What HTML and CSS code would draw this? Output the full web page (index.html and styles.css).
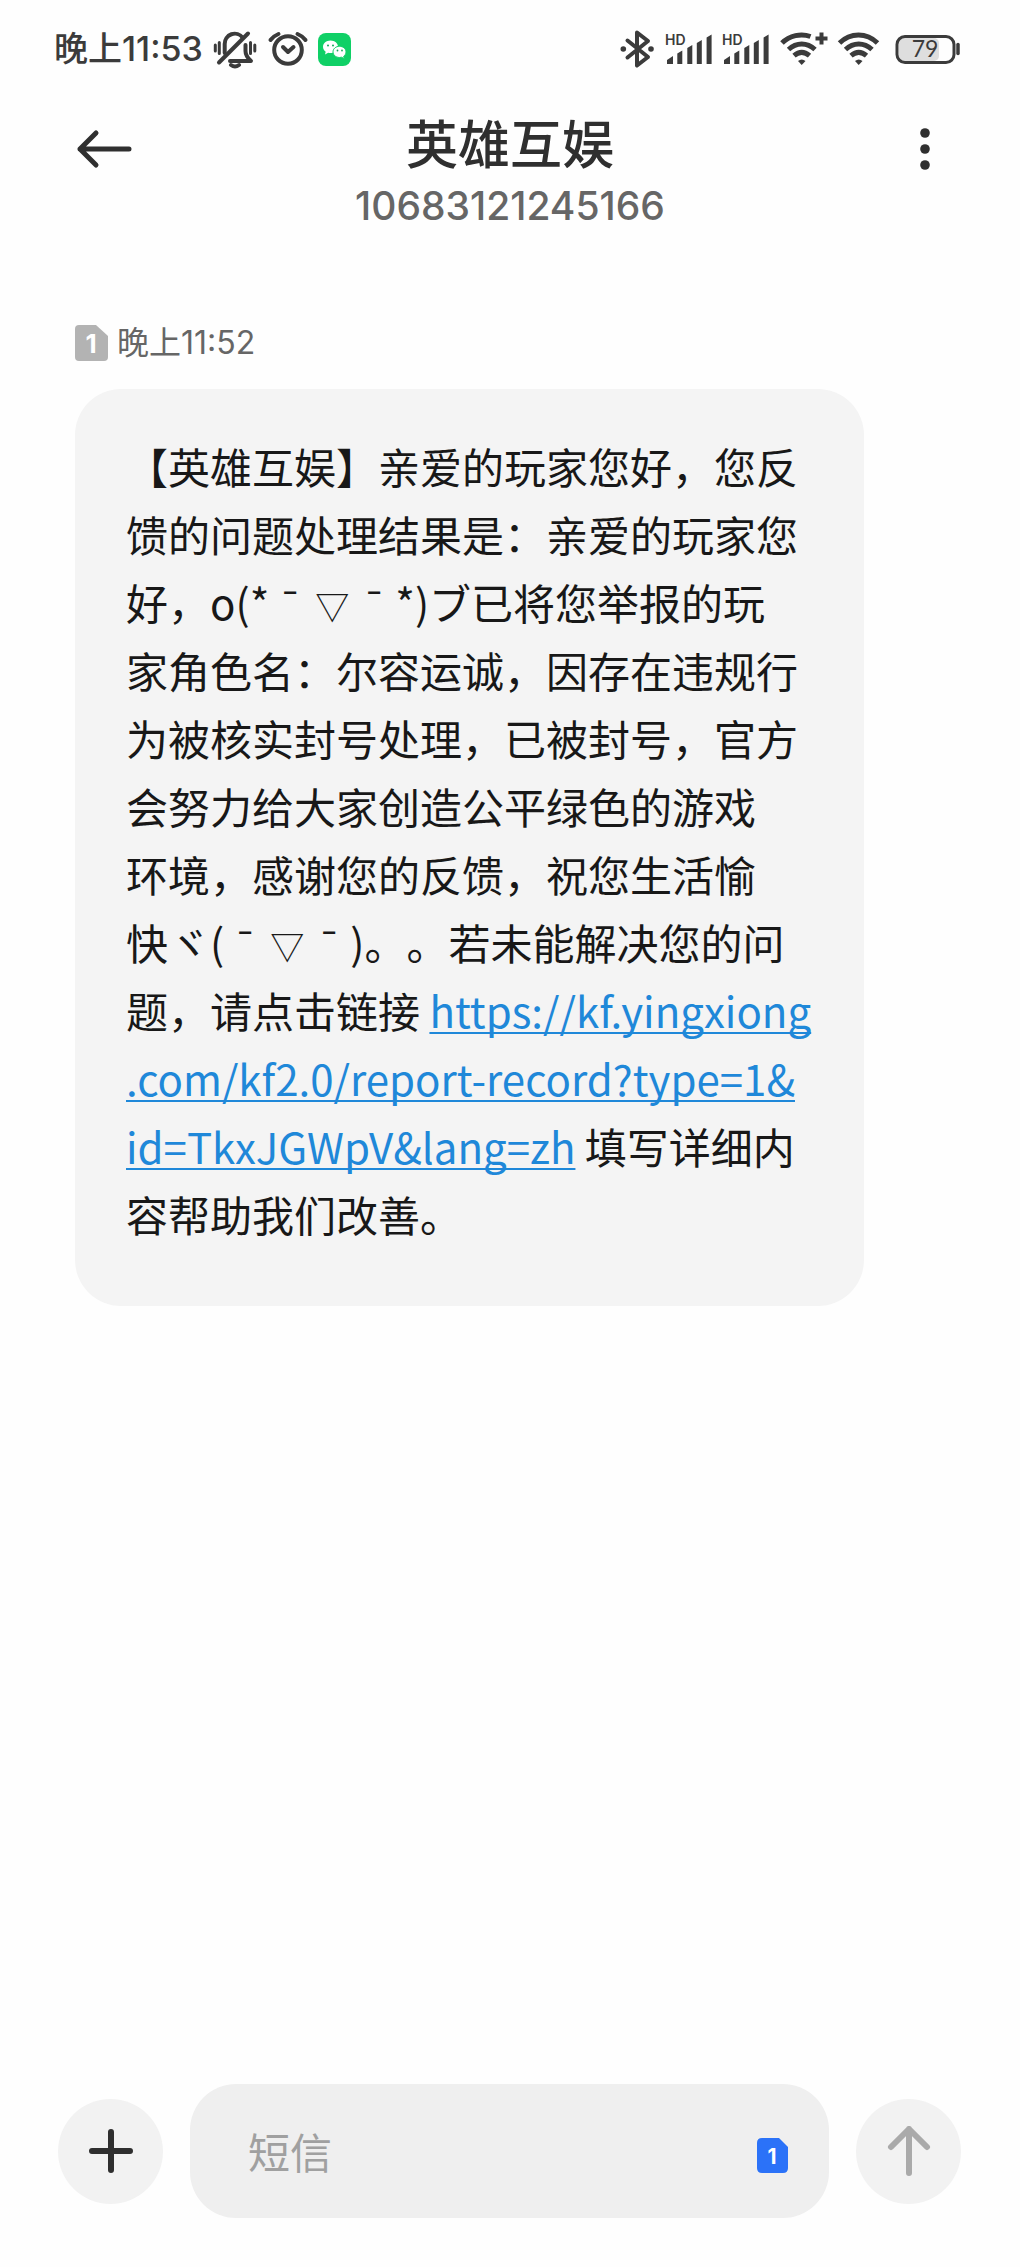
FILE: index.html
```html
<!DOCTYPE html>
<html lang="zh-CN">
<head>
<meta charset="utf-8">
<meta name="viewport" content="width=device-width, initial-scale=1">
<title>英雄互娱</title>
<link rel="stylesheet" href="styles.css">
</head>
<body>
<div class="status">
  <div class="status-left">
    <span class="clock">晚上11:53</span>
    <svg class="line" width="46" height="40" viewBox="0 0 46 40" aria-hidden="true">
      <path d="M12.700 24V15a10 10 0 0 1 18-6.300M33.500 16V22c0 4 2 7 5.500 10H18"/>
      <path d="M7 33.500L36 4.500"/>
      <path d="M19 36q4 3 8 0"/>
      <path class="thin" d="M3.300 16v6M7.300 13.500v11M38.500 13.500v11M42.800 16v6"/>
    </svg>
    <svg class="line" width="42" height="40" viewBox="0 0 42 40" aria-hidden="true">
      <circle cx="21" cy="21" r="13.800"/>
      <path d="M3.500 11q3-4 8-6M38.500 11q-3-4-8-6M16 18l5 5 5.500-5"/>
    </svg>
    <svg width="33" height="33" viewBox="0 0 33 33" aria-hidden="true">
      <rect width="33" height="33" rx="8" fill="#0fd066"/>
      <path d="M12.500 7.500c-4.200 0-7.500 2.800-7.500 6.300 0 2 1 3.700 2.700 4.900L7 21.500l3.200-1.700c.8.200 1.500.3 2.300.3 4.200 0 7.500-2.800 7.500-6.300s-3.300-6.300-7.500-6.300z" fill="#fff"/>
      <path d="M21.500 13.300c-3.700 0-6.500 2.500-6.500 5.600s2.800 5.600 6.500 5.600c.7 0 1.400-.1 2-.3l2.800 1.500-.6-2.500c1.500-1 2.300-2.500 2.300-4.300 0-3.100-2.800-5.600-6.500-5.600z" fill="#fff" stroke="#0fd066"/>
      <g fill="#12a85a"><circle cx="10" cy="12.500" r="1"/><circle cx="15" cy="12.500" r="1"/><circle cx="19.500" cy="17.500" r=".9"/><circle cx="24" cy="17.500" r=".9"/></g>
    </svg>
  </div>
  <div class="status-right">
    <svg class="line" width="39" height="40" viewBox="0 0 39 40" aria-hidden="true">
      <path d="M9.500 11.500L30 28 19 36.500V3.500L30 12 9.500 28.500"/>
      <circle class="solid" cx="5.300" cy="20" r="2.800"/><circle class="solid" cx="33" cy="20" r="2.800"/>
    </svg>
    <svg class="fill" width="51" height="40" viewBox="0 0 51 40" aria-hidden="true">
      <text class="hd" x="2" y="16">HD</text>
      <path d="M4 35v-4l6-4v8zM14.300 35V24.500l5-3V35zM24.300 35V19l5-3v19zM33.800 35V14l5-3v24zM43.600 35V8.500l5-3V35z"/>
    </svg>
    <svg class="fill" width="51" height="40" viewBox="0 0 51 40" aria-hidden="true">
      <text class="hd" x="2" y="16">HD</text>
      <path d="M4 35v-4l6-4v8zM14.300 35V24.500l5-3V35zM24.300 35V19l5-3v19zM33.800 35V14l5-3v24zM43.600 35V8.500l5-3V35z"/>
    </svg>
    <svg class="wifi" width="53" height="40" viewBox="-3 0 53 40" aria-hidden="true">
      <path d="M2 14C9.500 6.500 21 4 30.500 7.500M8.500 20.500c8-7.300 18.500-7.300 26.500 0M14 26.700c5-4.300 10.500-4.300 15.500 0"/>
      <path class="solid" d="M18 32q3.700-3 7.500 0l-3.800 4z"/>
      <path class="plus" d="M35.500 9.500h12M41.500 3.500v12"/>
    </svg>
    <svg class="wifi" width="46" height="40" viewBox="0 0 46 40" aria-hidden="true">
      <path d="M3.500 14c11-10.700 27-10.700 38 0M9.500 20.500c8-7.300 18.500-7.300 26.500 0M15 26.700c5-4.300 10.500-4.300 15.500 0"/>
      <path class="solid" d="M19 32q3.700-3 7.500 0l-3.800 4z"/>
    </svg>
    <svg width="74" height="40" viewBox="-6 0 74 40" role="img" aria-label="79%">
      <rect x="5" y="9" width="40" height="23" rx="5" fill="#dedede"/>
      <rect x="3" y="7.500" width="57" height="26" rx="8" fill="none" stroke="#3b3b3b" stroke-width="3"/>
      <path d="M64 15.500v9" stroke="#3b3b3b" stroke-width="3.500" stroke-linecap="round"/>
      <text class="charge" x="31" y="28" text-anchor="middle">79</text>
    </svg>
  </div>
</div>

<header class="bar">
  <button class="tool" type="button" aria-label="返回">
    <svg width="58" height="44" viewBox="0 0 58 44"><path d="M54 22H5M21 6L5 22l16 16"/></svg>
  </button>
  <div class="who">
    <h1>英雄互娱</h1>
    <p>10683121245166</p>
  </div>
  <button class="tool more" type="button" aria-label="更多">
    <svg width="12" height="44" viewBox="0 0 12 44"><circle cx="6" cy="6" r="4.800"/><circle cx="6" cy="22" r="4.800"/><circle cx="6" cy="38" r="4.800"/></svg>
  </button>
</header>

<main class="thread">
  <div class="stamp">
    <svg width="33" height="36" viewBox="0 0 33 36" aria-label="卡1" role="img">
      <path d="M4 0h17l12 11v21q0 4-4 4H4q-4 0-4-4V4q0-4 4-4z" fill="#b3b3b3"/>
      <text class="sim" x="16" y="28" text-anchor="middle">1</text>
    </svg>
    <time>晚上11:52</time>
  </div>
  <p class="bubble">【英雄互娱】亲爱的玩家您好，您反<br>馈的问题处理结果是：亲爱的玩家您<br>好，o(*<span class="wide">ˉ</span><span class="wide mouth">▽</span><span class="wide">ˉ</span>*)ブ已将您举报的玩<br>家角色名：尔容运诚，因存在违规行<br>为被核实封号处理，已被封号，官方<br>会努力给大家创造公平绿色的游戏<br>环境，感谢您的反馈，祝您生活愉<br>快ヾ(<span class="wide">ˉ</span><span class="wide mouth">▽</span><span class="wide">ˉ</span>)。。若未能解决您的问<br>题，请点击链接 <a href="https://kf.yingxiong.com/kf2.0/report-record?type=1&amp;id=TkxJGWpV&amp;lang=zh">https://kf.yingxiong<br>.com/kf2.0/report-record?type=1&amp;<br>id=TkxJGWpV&amp;lang=zh</a> 填写详细内<br>容帮助我们改善。</p>
</main>

<form class="composer">
  <button class="round" type="button" aria-label="添加">
    <svg width="50" height="50" viewBox="0 0 50 50"><path d="M25 6v38M6 25h38"/></svg>
  </button>
  <div class="field">
    <input type="text" aria-label="短信" placeholder="短信">
    <button class="card" type="button" aria-label="卡1">
      <svg width="31" height="35" viewBox="0 0 31 35">
        <path d="M5 0h17l9 9v21q0 5-5 5H5q-5 0-5-5V5q0-5 5-5z" fill="#2b72f8"/>
        <text class="sim-small" x="15" y="26" text-anchor="middle">1</text>
      </svg>
    </button>
  </div>
  <button class="round send" type="submit" aria-label="发送">
    <svg width="50" height="50" viewBox="0 0 50 50"><path d="M25 47V3M7 21L25 3l18 18"/></svg>
  </button>
</form>
</body>
</html>
```
FILE: styles.css
```css
* { box-sizing: border-box; }

body {
  margin: 0;
  min-height: 100vh;
  display: flex;
  flex-direction: column;
  background: #fefefe;
  color: #181818;
  font-family: "Noto Sans CJK SC", sans-serif;
  text-spacing-trim: space-all;
}

h1, p { margin: 0; }
svg { display: block; flex: none; }
button {
  padding: 0;
  border: 0;
  background: none;
  cursor: pointer;
}

/* status bar */
.status {
  display: flex;
  justify-content: space-between;
  align-items: center;
  padding: 29px 58px 0 54px;
}
.status-left, .status-right {
  display: flex;
  align-items: center;
  height: 40px;
}
.status-left { gap: 9px; }
.status-right { gap: 6px; }
.clock {
  font-family: Inter, "Noto Sans CJK SC", sans-serif;
  font-size: 34px;
  font-weight: 500;
  line-height: 40px;
  color: #3b3b3b;
}
.line, .wifi {
  fill: none;
  stroke: #3b3b3b;
  stroke-width: 4;
  stroke-linecap: round;
  stroke-linejoin: round;
}
.line .thin { stroke-width: 3; }
.wifi { stroke-linecap: butt; stroke-width: 5; }
.wifi .plus { stroke-width: 4; }
.solid { fill: #3b3b3b; stroke: none; }
.fill { fill: #3b3b3b; }
.hd { font: 600 14px Inter, sans-serif; }
.charge { font: 400 23px Lato, sans-serif; fill: #3b3b3b; }

/* conversation header */
.bar {
  display: flex;
  justify-content: space-between;
  padding: 37px 75px 0;
}
.tool {
  height: 86px;
  width: 58px;
  display: flex;
  align-items: center;
}
.tool path {
  fill: none;
  stroke: #2f2f2f;
  stroke-width: 5;
  stroke-linecap: round;
  stroke-linejoin: round;
}
.more { justify-content: flex-end; padding-right: 14px; fill: #2f2f2f; }
.who { text-align: center; }
.who h1 {
  font-size: 52px;
  font-weight: 500;
  line-height: 72px;
  color: #2f2f2f;
}
.who p {
  font-family: Inter, sans-serif;
  font-size: 39px;
  font-weight: 500;
  line-height: 56px;
  color: #666;
}

/* messages */
.thread { padding: 84px 156px 48px 75px; }
.stamp {
  display: flex;
  align-items: center;
  gap: 9px;
  margin-bottom: 21px;
  font-family: Inter, "Noto Sans CJK SC", sans-serif;
  font-size: 32px;
  line-height: 50px;
  color: #666;
}
.sim { font: 700 26px Inter, sans-serif; fill: #fff; }
.sim-small { font: 700 21px Inter, sans-serif; fill: #fff; }
.bubble {
  padding: 43px 51px 58px;
  border-radius: 46px;
  background: #f4f4f4;
  font-size: 42px;
  line-height: 68px;
  white-space: nowrap;
}
.bubble a {
  color: #1f88d9;
  text-decoration: underline 2px;
  text-underline-offset: 4px;
  text-decoration-skip-ink: none;
}
.wide {
  display: inline-block;
  width: 42px;
  font-family: Lato, "Noto Sans CJK SC", sans-serif;
  line-height: 42px;
  text-align: center;
}
.mouth { font-size: 34px; }

/* composer */
.composer {
  display: flex;
  align-items: center;
  gap: 27px;
  margin-top: auto;
  padding: 0 59px 49px 58px;
}
.round {
  flex: none;
  display: flex;
  align-items: center;
  justify-content: center;
  width: 105px;
  height: 105px;
  border-radius: 50%;
  background: #f2f2f2;
}
.round path {
  fill: none;
  stroke: #2f2f2f;
  stroke-width: 6;
  stroke-linecap: round;
  stroke-linejoin: round;
}
.send path { stroke: #aaa; }
.field {
  flex: 1;
  display: flex;
  align-items: center;
  min-width: 0;
  height: 134px;
  padding: 0 41px 0 58px;
  border-radius: 46px;
  background: #efefef;
}
.field input {
  flex: 1;
  min-width: 0;
  padding: 0;
  border: 0;
  outline: 0;
  background: none;
  color: #181818;
  font: inherit;
  font-size: 42px;
  line-height: 68px;
}
.field input::placeholder { color: #a0a0a0; opacity: 1; }
.card { margin-top: 8px; }
```
